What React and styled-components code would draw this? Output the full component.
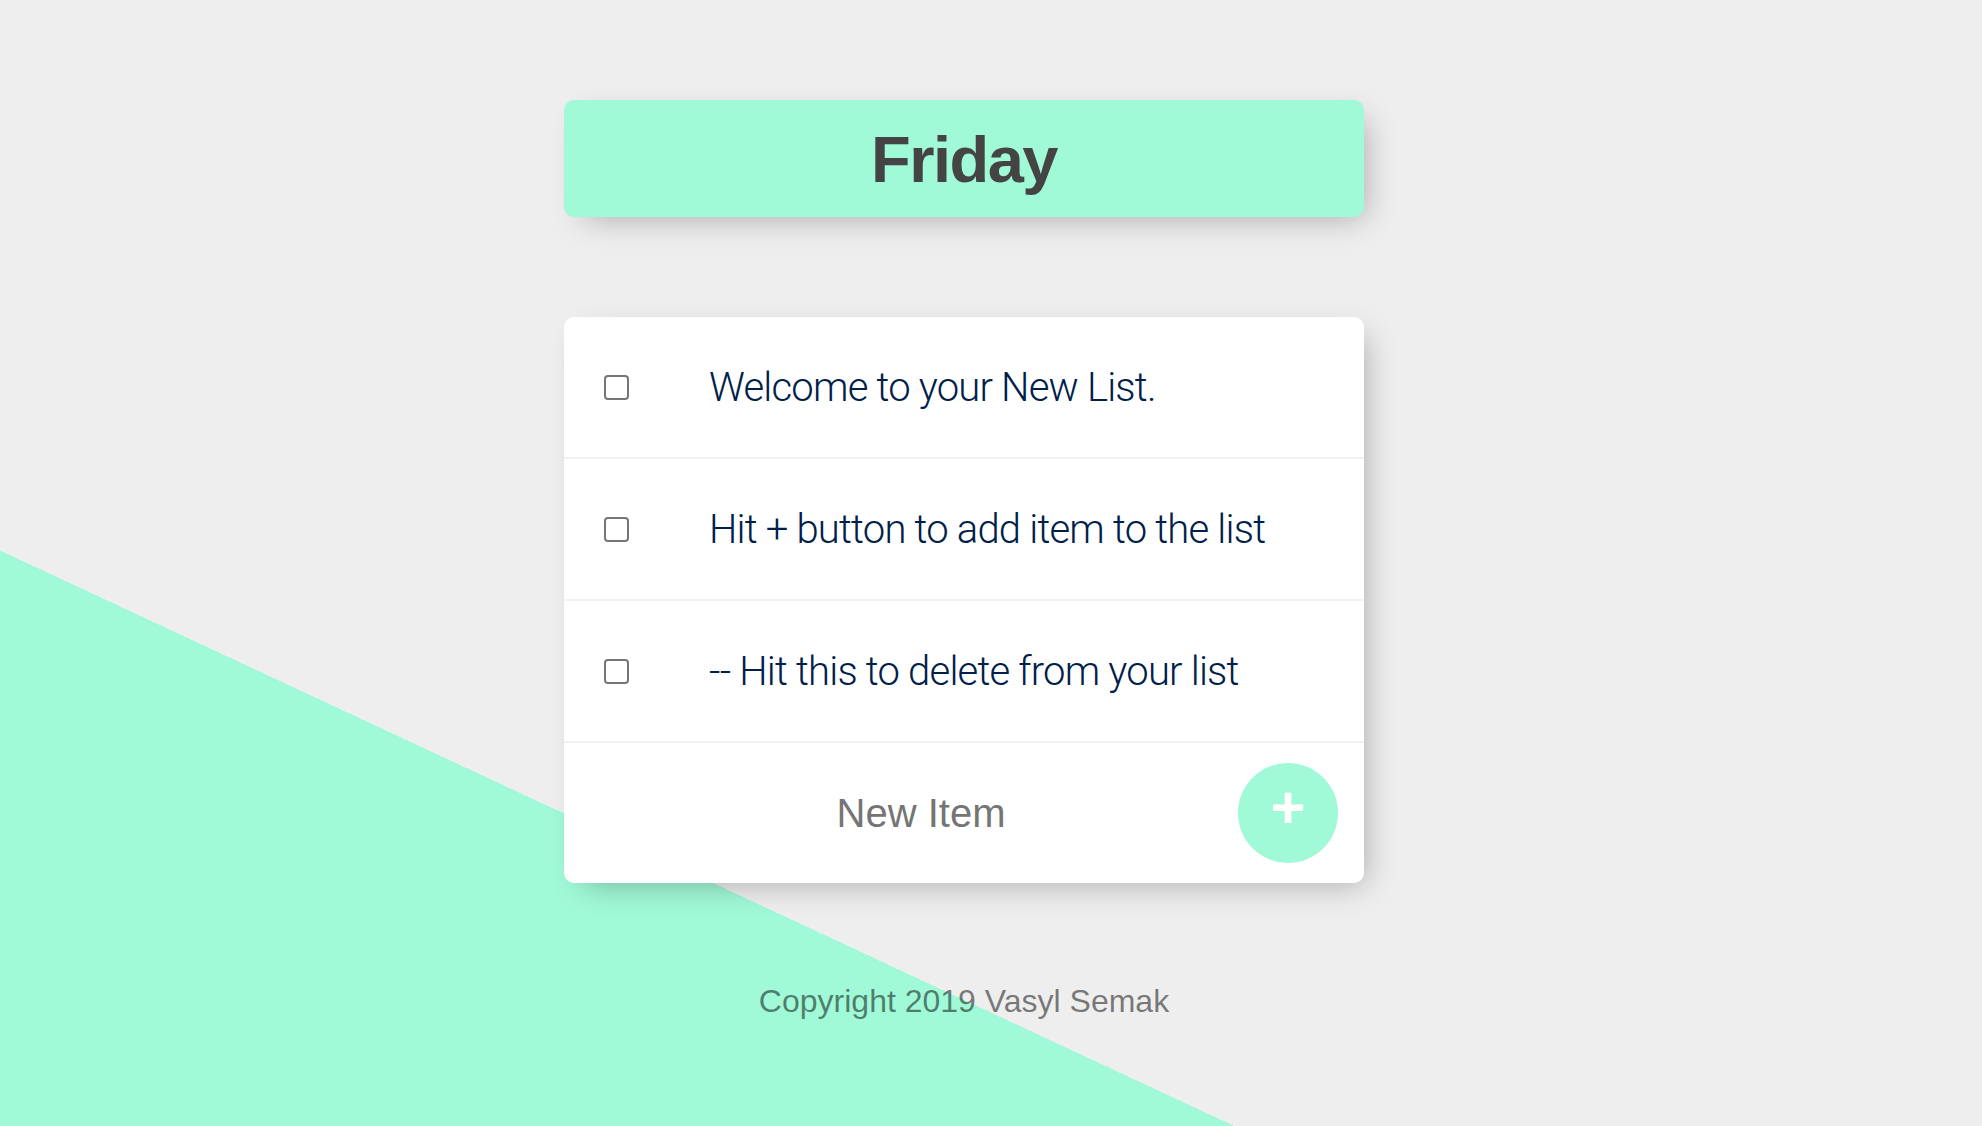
import React from "react";
import styled, { createGlobalStyle } from "styled-components";

const MINT = "#a0f9d7";
const GREY = "#eeeeee";

const GlobalStyle = createGlobalStyle`
  html {
    background-color: ${GREY};
    background-image: linear-gradient(25deg, ${MINT} 50%, ${GREY} 50%);
    background-size: 1928px 2000px;
    background-repeat: no-repeat;
    background-position: 0 0;
    font-family: "Liberation Sans", Arial, sans-serif;
  }
  body {
    margin: 0;
    overflow: hidden;
  }
`;

const Page = styled.main`
  width: 1928px;
  display: flex;
  flex-direction: column;
  padding-top: 100px;
`;

const Box = styled.section`
  width: 800px;
  margin: 0 auto 100px;
  background: ${(p) => (p.$accent ? MINT : "#ffffff")};
  border-radius: 10px;
  box-shadow: 10px 10px 30px -10px rgba(0, 0, 0, 0.3);
  overflow: hidden;
`;

const Title = styled.h1`
  margin: 0;
  padding: 21px 20px 19px;
  text-align: center;
  font-family: "Liberation Sans", Arial, sans-serif;
  font-weight: 700;
  font-size: 65px;
  line-height: 77px;
  letter-spacing: -1.5px;
  color: #444444;
`;

const Item = styled.div`
  min-height: 140px;
  display: flex;
  align-items: center;
  border-bottom: 2px solid #f1f1f1;
  &:last-child {
    border-bottom: none;
  }
`;

const Check = styled.input.attrs({ type: "checkbox" })`
  appearance: none;
  -webkit-appearance: none;
  box-sizing: border-box;
  width: 25px;
  height: 25px;
  margin: 0 40px;
  border: 2px solid #767676;
  border-radius: 4px;
  background: #ffffff;
  flex-shrink: 0;
`;

const Text = styled.p`
  margin: 0;
  padding: 40px;
  font-family: Roboto, "Liberation Sans", sans-serif;
  font-weight: 300;
  font-size: 40px;
  letter-spacing: -0.8px;
  color: #00204a;
`;

const Form = styled.form`
  min-height: 140px;
  display: flex;
  align-items: center;
  padding-left: 40px;
`;

const NewInput = styled.input`
  box-sizing: content-box;
  width: 626px;
  height: 120px;
  padding: 2px 4px;
  border: none;
  background: transparent;
  text-align: center;
  font-family: "Liberation Sans", Arial, sans-serif;
  font-size: 40px;
  color: #00204a;
  outline: none;
  &::placeholder {
    color: #757575;
  }
`;

const AddButton = styled.button`
  box-sizing: border-box;
  width: 100px;
  height: 100px;
  border-radius: 50%;
  border: 0;
  background: ${MINT};
  color: #ffffff;
  font-family: "Liberation Sans", Arial, sans-serif;
  font-weight: 700;
  font-size: 60px;
  padding: 0 0 12px;
  display: flex;
  align-items: center;
  justify-content: center;
  cursor: pointer;
`;

const Footer = styled.footer`
  text-align: center;
  font-family: "Liberation Sans", Arial, sans-serif;
  font-size: 32px;
  color: rgba(0, 0, 0, 0.5);
`;

const items = [
  "Welcome to your New List.",
  "Hit + button to add item to the list",
  "-- Hit this to delete from your list",
];

export default function App() {
  return (
    <>
      <GlobalStyle />
      <Page>
        <Box $accent>
          <Title>Friday</Title>
        </Box>
        <Box>
          {items.map((t) => (
            <Item key={t}>
              <Check />
              <Text>{t}</Text>
            </Item>
          ))}
          <Form onSubmit={(e) => e.preventDefault()}>
            <NewInput type="text" placeholder="New Item" autoComplete="off" />
            <AddButton type="submit">+</AddButton>
          </Form>
        </Box>
        <Footer>Copyright 2019 Vasyl Semak</Footer>
      </Page>
    </>
  );
}
